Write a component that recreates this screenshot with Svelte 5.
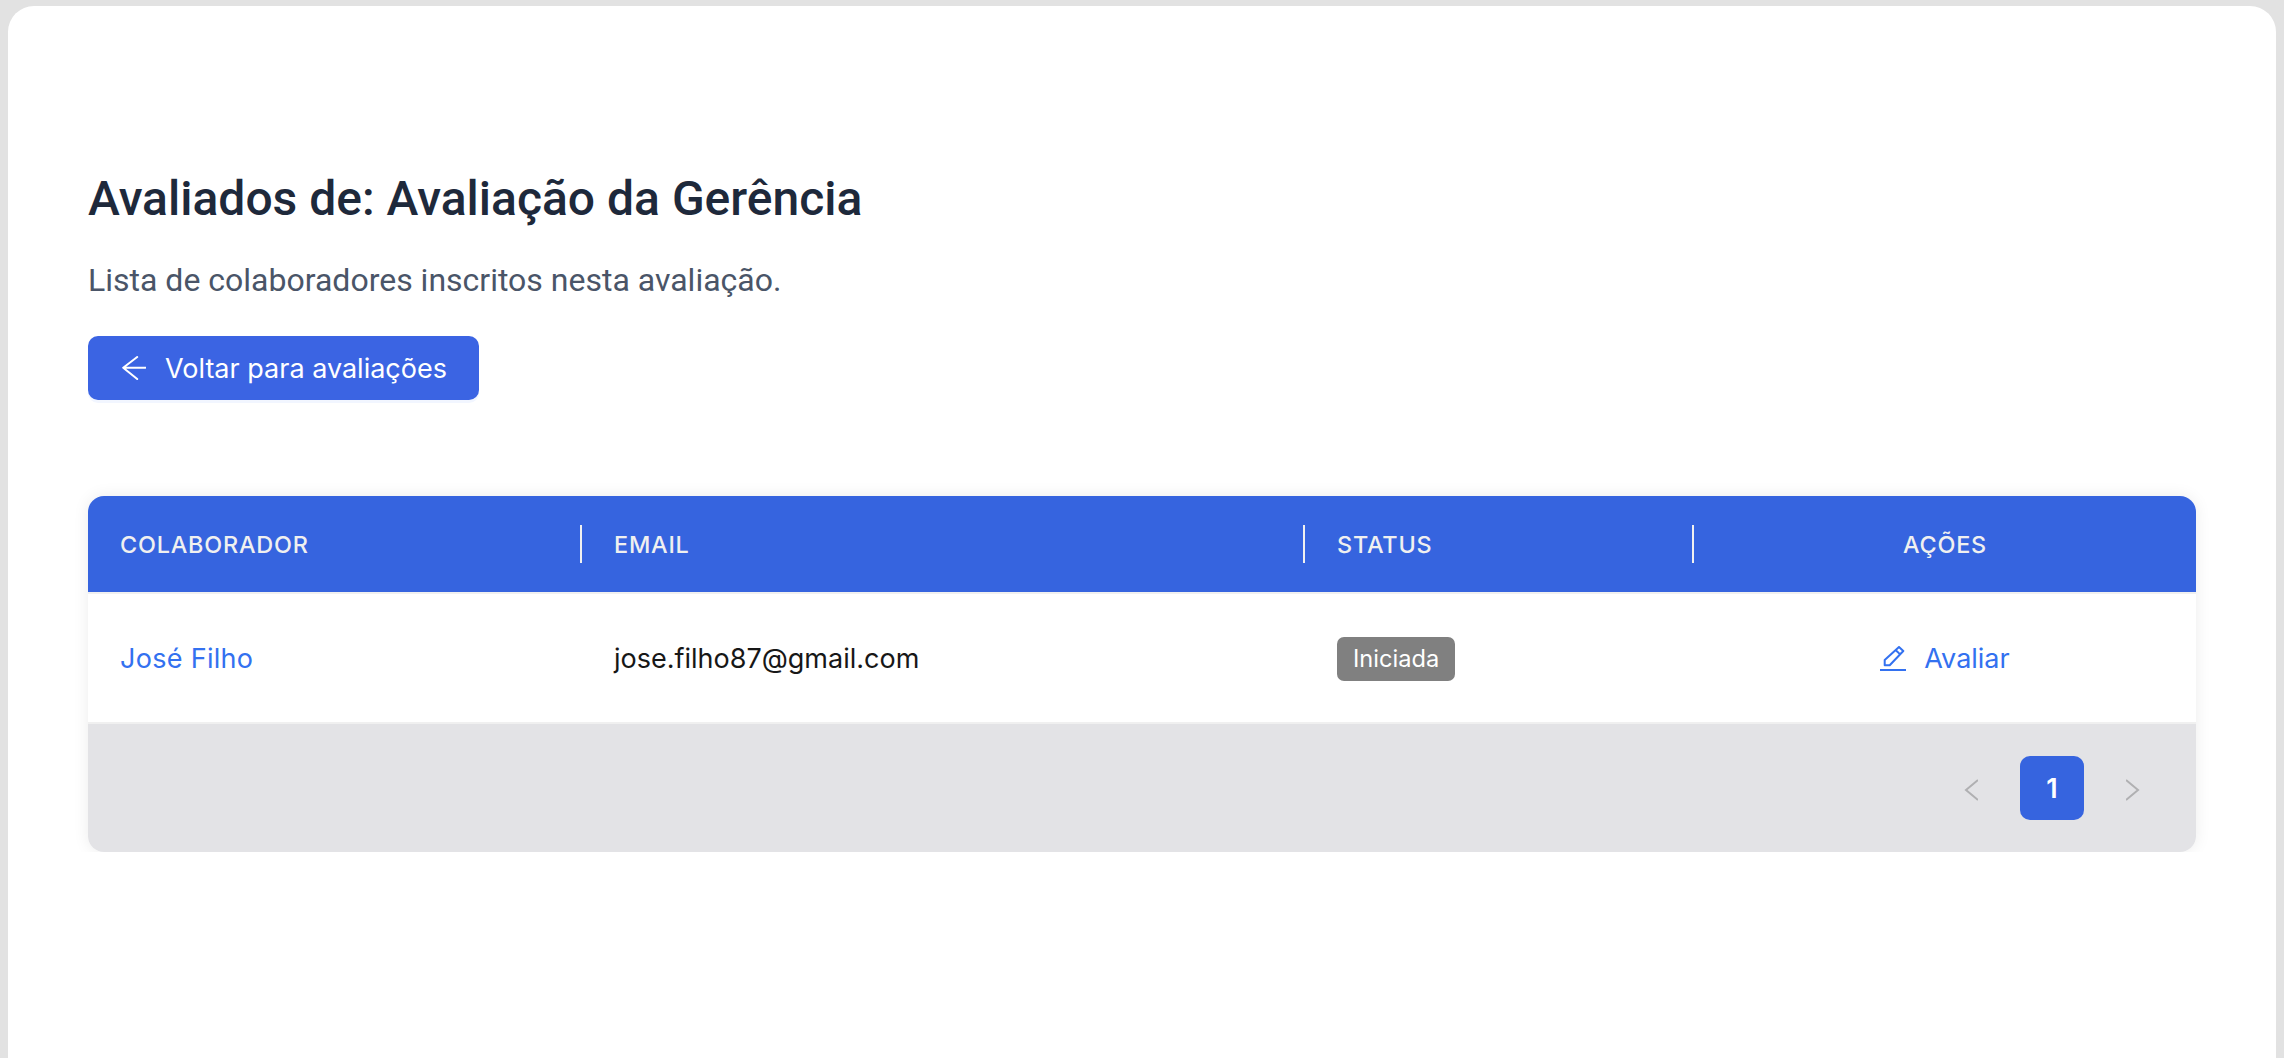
<script lang="ts">
  const columns = [
    { key: 'name', label: 'Colaborador' },
    { key: 'email', label: 'Email' },
    { key: 'status', label: 'Status' },
    { key: 'actions', label: 'Ações' },
  ];

  const rows = [{ name: 'José Filho', email: 'jose.filho87@gmail.com', status: 'Iniciada' }];
</script>

<div class="shell">
  <main class="card">
    <h1>Avaliados de: Avaliação da Gerência</h1>
    <p class="lead">Lista de colaboradores inscritos nesta avaliação.</p>
    <button type="button" class="back">
      <svg viewBox="0 0 24 24" width="24" height="24" fill="none" stroke="currentColor" stroke-width="2" stroke-linecap="round" stroke-linejoin="round" aria-hidden="true">
        <path d="M23.5 11.7H1.2M15.2 1 1.2 11.7 15.2 23" />
      </svg>
      Voltar para avaliações
    </button>

    <section class="table">
      <div class="head grid">
        {#each columns as col}
          <div class="th" class:center={col.key === 'actions'}>{col.label}</div>
        {/each}
      </div>
      {#each rows as row}
        <div class="row grid">
          <div class="td"><a href="#top" class="link name">{row.name}</a></div>
          <div class="td">{row.email}</div>
          <div class="td"><span class="badge">{row.status}</span></div>
          <div class="td center">
            <a href="#top" class="link action">
              <svg viewBox="0 0 26 25" width="26" height="25" fill="none" stroke="currentColor" stroke-width="2" stroke-linejoin="round" aria-hidden="true">
                <path d="M0 24H26" />
                <path d="M4.7 19.3V14L19 1l4.3 4L9.7 19.3Z" />
                <path d="M15.8 4.2 20.2 8.4" />
              </svg>
              Avaliar
            </a>
          </div>
        </div>
      {/each}
      <footer class="foot">
        <button type="button" class="nav" aria-label="Anterior" disabled>
          <svg viewBox="0 0 14 22" width="14" height="22" fill="none" stroke="currentColor" stroke-width="2"><path d="M14 1 2 11l12 10" /></svg>
        </button>
        <button type="button" class="page">1</button>
        <button type="button" class="nav" aria-label="Próxima" disabled>
          <svg viewBox="0 0 14 22" width="14" height="22" fill="none" stroke="currentColor" stroke-width="2"><path d="M0 1 12 11 0 21" /></svg>
        </button>
      </footer>
    </section>
  </main>
</div>

<style>
  :global(body) {
    margin: 0;
    background: #e2e2e2;
    font-family: Inter, 'Noto Sans', sans-serif;
  }

  .shell {
    height: 1058px;
    overflow: hidden;
    padding: 6px 8px 0;
    box-sizing: border-box;
  }

  .card {
    height: 1100px;
    padding: 165px 80px 0;
    box-sizing: border-box;
    background: #fff;
    border-radius: 26px 26px 0 0;
  }

  h1 {
    margin: 0;
    font-family: Roboto, sans-serif;
    font-size: 48px;
    line-height: 56px;
    font-weight: 500;
    color: #1e293b;
  }

  .lead {
    margin: 33px 0 0;
    font-family: Roboto, sans-serif;
    font-size: 32px;
    line-height: 40px;
    color: #4a5568;
  }

  .back {
    display: flex;
    align-items: center;
    gap: 19px;
    height: 64px;
    width: 391px;
    margin-top: 36px;
    padding: 0 0 0 34px;
    border: 0;
    border-radius: 10px;
    background: #3b64e3;
    color: #fff;
    font: 400 27px Inter, sans-serif;
    box-shadow: 0 3px 0 #f2f6ff;
  }

  .table {
    margin-top: 96px;
    border-radius: 16px;
    box-shadow: 0 0 16px rgba(0, 0, 0, 0.08);
    clip-path: inset(-24px -24px 0 -24px);
  }

  .grid {
    display: grid;
    grid-template-columns: 494px 723px 389px 1fr;
  }

  .head {
    height: 96px;
    background: #3664df;
    border-bottom: 2px solid #f0f0f0;
    border-radius: 16px 16px 0 0;
  }

  .th {
    position: relative;
    display: flex;
    align-items: center;
    padding-left: 32px;
    color: #f0f0f0;
    font-size: 23.4px;
    font-weight: 500;
    letter-spacing: 0.8px;
    text-transform: uppercase;
  }

  .th:not(:first-child)::before {
    content: '';
    position: absolute;
    left: -2px;
    top: 29px;
    height: 38px;
    width: 2px;
    background: #f0f0f0;
  }

  .th.center {
    justify-content: center;
    padding-left: 0;
  }

  .row {
    height: 128px;
    background: #fff;
    border-bottom: 2px solid #f0f0f0;
  }

  .td {
    display: flex;
    align-items: center;
    padding-left: 32px;
    font-size: 27px;
    color: #171717;
  }

  .td.center {
    justify-content: center;
    padding-left: 0;
  }

  .link {
    color: #3371f0;
    text-decoration: none;
  }

  .name {
    letter-spacing: 0.3px;
  }

  .action {
    display: flex;
    align-items: center;
    gap: 18px;
  }

  .badge {
    display: inline-block;
    margin-top: 2px;
    padding: 0 16px;
    line-height: 44px;
    border-radius: 7px;
    background: #808080;
    color: #fff;
    font-size: 23.6px;
  }

  .foot {
    display: flex;
    justify-content: flex-end;
    align-items: center;
    gap: 42px;
    height: 128px;
    padding-right: 56px;
    background: #e3e3e6;
    border-radius: 0 0 16px 16px;
  }

  .nav {
    display: flex;
    margin-top: 4px;
    padding: 0;
    border: 0;
    background: none;
    color: #b0b0b2;
  }

  .page {
    width: 64px;
    height: 64px;
    padding: 0;
    border: 0;
    border-radius: 10px;
    background: #3664df;
    color: #fff;
    font: 600 27px Inter, sans-serif;
  }
</style>
